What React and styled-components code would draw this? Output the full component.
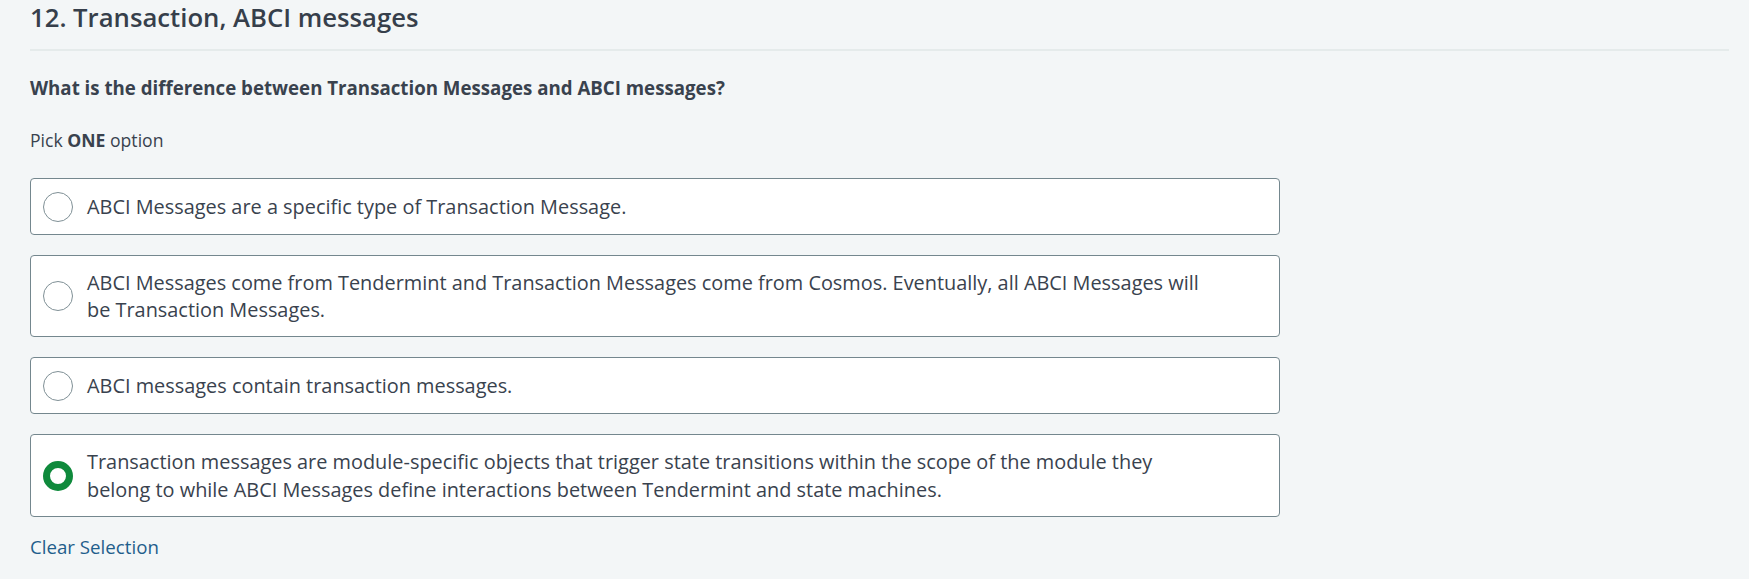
import styled, { createGlobalStyle } from "styled-components";

const GlobalStyle = createGlobalStyle`
  html, body {
    margin: 0;
    padding: 0;
    background: #f3f6f7;
  }
  body {
    font-family: "Open Sans", "Liberation Sans", sans-serif;
    color: #39424e;
  }
`;

const Page = styled.div`
  padding: 0 20px 20px 30px;
`;

const Title = styled.h2`
  margin: 0;
  font-size: 25.7px;
  font-weight: 600;
  line-height: 36px;
  padding-bottom: 13px;
  border-bottom: 2px solid #e5ebeb;
  color: #363f4b;
`;

const Question = styled.p`
  margin: 24px 0 0;
  font-size: 18.7px;
  font-weight: 700;
  line-height: 26px;
`;

const Hint = styled.p`
  margin: 27px 0 0;
  font-size: 17.6px;
  line-height: 24px;

  strong {
    font-weight: 700;
  }
`;

const Options = styled.div`
  width: 1250px;
  margin-top: 26px;
  display: flex;
  flex-direction: column;
  gap: 20px;
`;

const Option = styled.label`
  display: flex;
  align-items: center;
  gap: 14px;
  box-sizing: border-box;
  min-height: 57px;
  padding: 12.5px 65px 12.5px 12px;
  background: #fff;
  border: 1px solid #74878e;
  border-radius: 4px;
  cursor: pointer;
`;

const Radio = styled.span`
  flex: none;
  width: 30px;
  height: 30px;
  box-sizing: border-box;
  border-radius: 50%;
  border: ${(p) => (p.checked ? "7px solid #0f8a3c" : "1px solid #7f9096")};
  background: #fff;
`;

const OptionText = styled.span`
  font-size: 19.9px;
  line-height: 27.7px;
  color: #39424e;
`;

const ClearLink = styled.a`
  display: inline-block;
  margin-top: 17px;
  font-size: 18.7px;
  line-height: 26px;
  color: #1f5e8c;
  text-decoration: none;
  cursor: pointer;
`;

const options = [
  "ABCI Messages are a specific type of Transaction Message.",
  "ABCI Messages come from Tendermint and Transaction Messages come from Cosmos. Eventually, all ABCI Messages will be Transaction Messages.",
  "ABCI messages contain transaction messages.",
  "Transaction messages are module-specific objects that trigger state transitions within the scope of the module they belong to while ABCI Messages define interactions between Tendermint and state machines.",
];

export default function App() {
  const selected = 3;
  return (
    <>
      <GlobalStyle />
      <Page>
        <Title>12. Transaction, ABCI messages</Title>
        <Question>
          What is the difference between Transaction Messages and ABCI messages?
        </Question>
        <Hint>
          Pick <strong>ONE</strong> option
        </Hint>
        <Options>
          {options.map((text, i) => (
            <Option key={i}>
              <Radio checked={i === selected} />
              <OptionText>{text}</OptionText>
            </Option>
          ))}
        </Options>
        <ClearLink>Clear Selection</ClearLink>
      </Page>
    </>
  );
}
